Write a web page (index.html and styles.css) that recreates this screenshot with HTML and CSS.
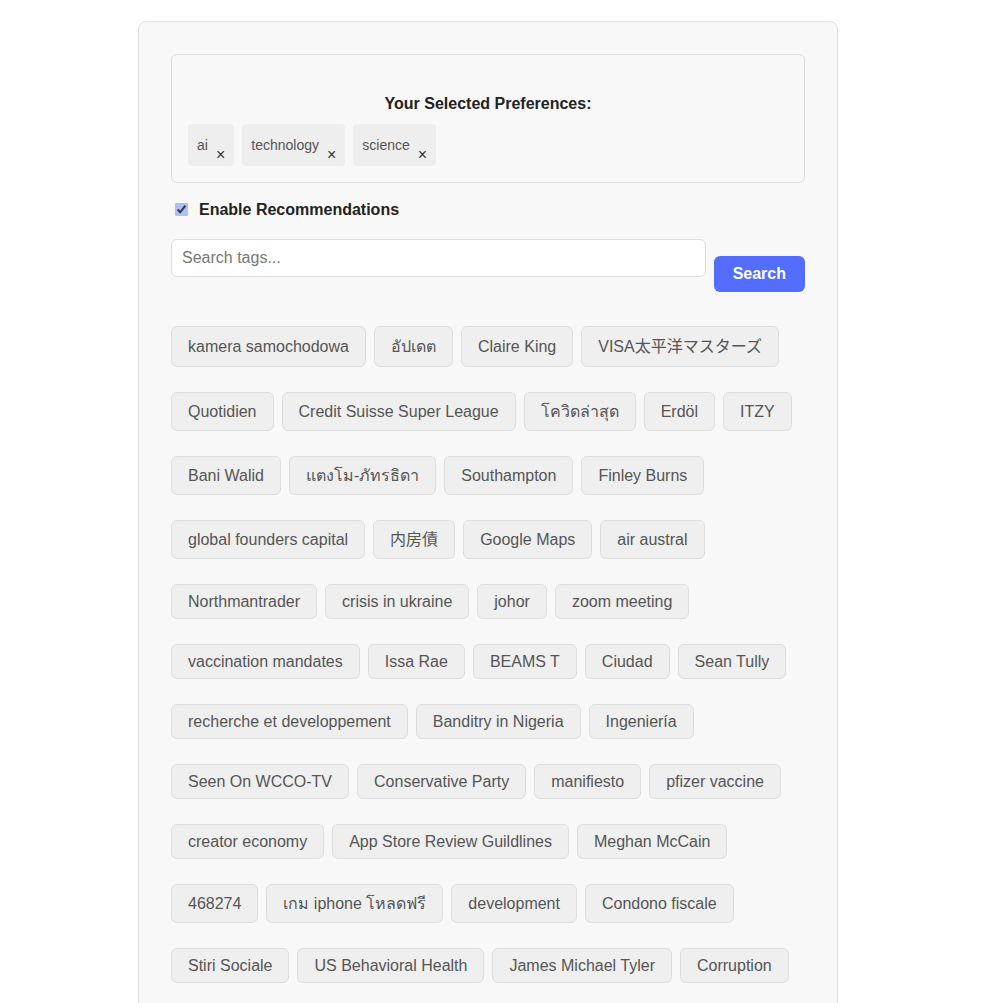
FILE: index.html
```html
<!DOCTYPE html>
<html lang="en">
<head>
<meta charset="utf-8">
<title>Tag Preferences</title>
<link rel="stylesheet" href="styles.css">
</head>
<body>
<div class="panel">
  <div class="prefs">
    <h3 class="prefs-title">Your Selected Preferences:</h3>
    <div class="pref-list">
      <span class="pref"><span class="pref-name">ai</span><span class="pref-remove">×</span></span>
      <span class="pref"><span class="pref-name">technology</span><span class="pref-remove">×</span></span>
      <span class="pref"><span class="pref-name">science</span><span class="pref-remove">×</span></span>
    </div>
  </div>

  <label class="toggle"><input class="toggle-box" type="checkbox" checked>Enable Recommendations</label>

  <div class="search">
    <input class="search-input" type="text" placeholder="Search tags...">
    <button class="search-btn" type="button">Search</button>
  </div>

  <div class="tags">
    <span class="tag">kamera samochodowa</span>
    <span class="tag" lang="th">อัปเดต</span>
    <span class="tag">Claire King</span>
    <span class="tag" lang="ja">VISA太平洋マスターズ</span>
    <span class="tag">Quotidien</span>
    <span class="tag">Credit Suisse Super League</span>
    <span class="tag" lang="th">โควิดล่าสุด</span>
    <span class="tag">Erdöl</span>
    <span class="tag">ITZY</span>
    <span class="tag">Bani Walid</span>
    <span class="tag" lang="th">แตงโม-ภัทรธิดา</span>
    <span class="tag">Southampton</span>
    <span class="tag">Finley Burns</span>
    <span class="tag">global founders capital</span>
    <span class="tag" lang="zh">内房債</span>
    <span class="tag">Google Maps</span>
    <span class="tag">air austral</span>
    <span class="tag">Northmantrader</span>
    <span class="tag">crisis in ukraine</span>
    <span class="tag">johor</span>
    <span class="tag">zoom meeting</span>
    <span class="tag">vaccination mandates</span>
    <span class="tag">Issa Rae</span>
    <span class="tag">BEAMS T</span>
    <span class="tag">Ciudad</span>
    <span class="tag">Sean Tully</span>
    <span class="tag">recherche et developpement</span>
    <span class="tag">Banditry in Nigeria</span>
    <span class="tag">Ingeniería</span>
    <span class="tag">Seen On WCCO-TV</span>
    <span class="tag">Conservative Party</span>
    <span class="tag">manifiesto</span>
    <span class="tag">pfizer vaccine</span>
    <span class="tag">creator economy</span>
    <span class="tag">App Store Review Guildlines</span>
    <span class="tag">Meghan McCain</span>
    <span class="tag">468274</span>
    <span class="tag" lang="th">เกม iphone โหลดฟรี</span>
    <span class="tag">development</span>
    <span class="tag">Condono fiscale</span>
    <span class="tag">Stiri Sociale</span>
    <span class="tag">US Behavioral Health</span>
    <span class="tag">James Michael Tyler</span>
    <span class="tag">Corruption</span>
  </div>
</div>
</body>
</html>
```

FILE: styles.css
```css
html, body {
  margin: 0;
  padding: 0;
  background: #ffffff;
}

body {
  padding-right: 17px;
  font-family: "Liberation Sans", Arial, "Noto Sans CJK JP", sans-serif;
  color: #333;
}

.panel {
  box-sizing: border-box;
  width: 700px;
  margin: 21px auto 40px;
  padding: 32px;
  background: #f8f8f8;
  border: 1px solid #e2e2e2;
  border-radius: 8px;
}

/* Selected preferences */
.prefs {
  padding: 16px;
  border: 1px solid #dddddd;
  border-radius: 6px;
  background: #f8f8f8;
}

.prefs-title {
  margin: 24px 0 11px;
  font-size: 16px;
  line-height: 18px;
  font-weight: bold;
  text-align: center;
  color: #222;
}

.pref-list {
  display: flex;
  gap: 8px;
}

.pref {
  display: inline-flex;
  align-items: flex-start;
  gap: 8px;
  padding: 13px 9px 3px;
  background: #eeeeee;
  border-radius: 4px;
  font-size: 14px;
  line-height: 16px;
  color: #555;
}

.pref-remove {
  margin-top: 9.5px;
  font-size: 16px;
  line-height: 16px;
  color: #333;
}

/* Toggle */
.toggle {
  display: flex;
  align-items: center;
  margin: 18px 0 20px;
  font-size: 16px;
  font-weight: bold;
  line-height: 18px;
  color: #222;
}

.toggle-box {
  width: 13px;
  height: 13px;
  margin: 0 11px 0 4px;
  accent-color: #a9c0fa;
}

/* Search */
.search {
  display: flex;
  align-items: flex-start;
  gap: 8px;
  margin-bottom: 34px;
}

.search-input {
  flex: 1;
  box-sizing: border-box;
  height: 38px;
  padding: 0 10px;
  font-family: inherit;
  font-size: 16px;
  color: #333;
  background: #ffffff;
  border: 1px solid #dddddd;
  border-radius: 6px;
  outline: none;
}

.search-input::placeholder {
  color: #777;
}

.search-btn {
  margin-top: 17px;
  padding: 9px 19px;
  font-family: inherit;
  font-size: 16px;
  font-weight: bold;
  line-height: 18px;
  color: #ffffff;
  background: #536dfe;
  border: none;
  border-radius: 6px;
  cursor: pointer;
}

/* Tags */
.tags {
  display: flex;
  flex-wrap: wrap;
  gap: 25px 8px;
}

.tag {
  display: inline-flex;
  align-items: center;
  padding: 8px 16px;
  font-size: 16px;
  line-height: 17px;
  color: #555;
  background: #efefef;
  border: 1px solid #dddddd;
  border-radius: 6px;
  white-space: nowrap;
}

.tag:lang(th) {
  line-height: 21px;
}

.tag:lang(zh) {
  line-height: 21px;
}

.tag:lang(ja) {
  line-height: 23px;
}
```
